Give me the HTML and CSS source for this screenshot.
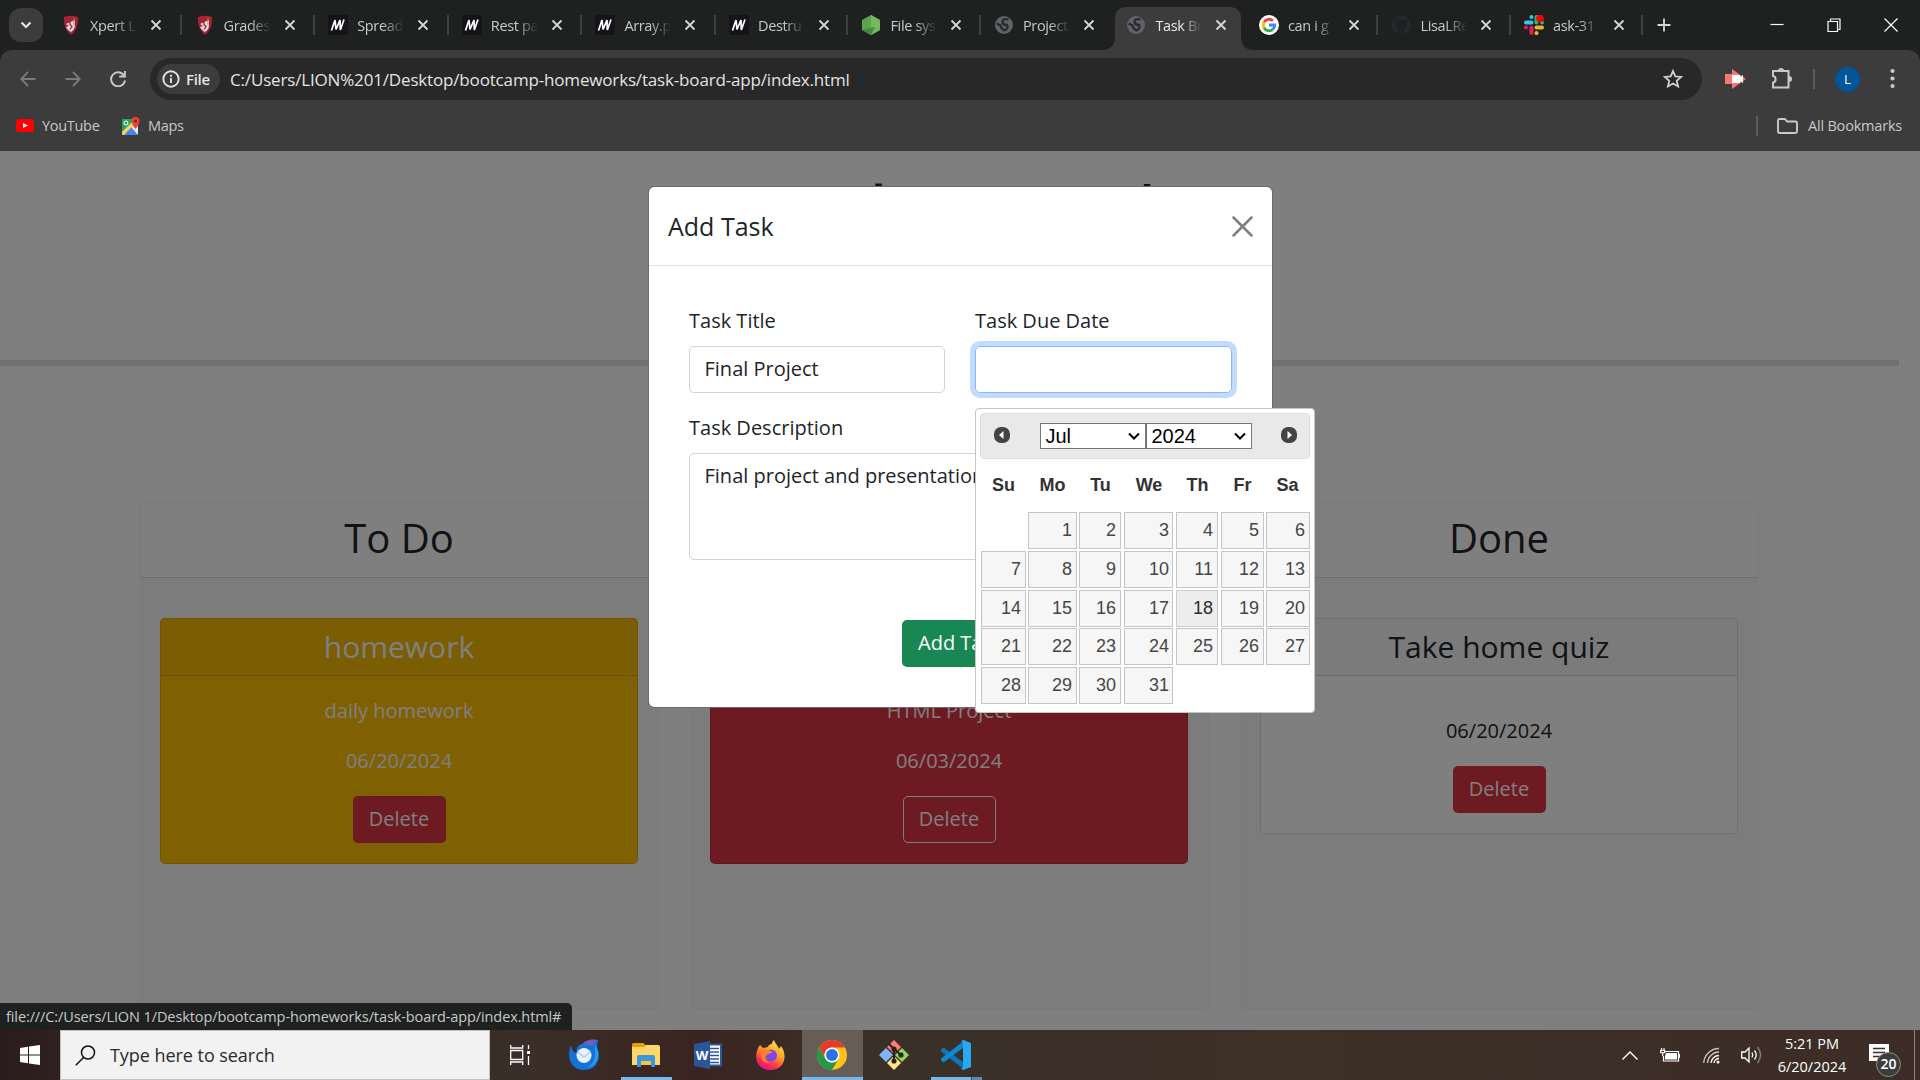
FILE: index.html
```html
<!DOCTYPE html>
<html lang="en">
<head>
<meta charset="utf-8">
<title>Task Board</title>
<link rel="stylesheet" href="styles.css">
</head>
<body>
<svg class="defs" width="0" height="0" aria-hidden="true">
  <symbol id="shield" viewBox="0 0 20 20"><path d="M3 2Q10-.5 17 2Q18 14 10 20Q2 14 3 2Z" fill="#a52238"/><path d="M5 9l9-4v4c0 4-1 6-4 8-2-1-4-3-5-5l3-1z" fill="#e8d9dc"/><path d="M9 5.500v4l2 2-2 3" stroke="#8d2a3c" stroke-width="1.300" fill="none"/><path d="M13 3v7" stroke="#b08a3c" stroke-width="1"/></symbol>
  <symbol id="mdn" viewBox="0 0 20 20"><path d="M0 0h20v20H0z" fill="#15141a"/><path d="M3.500 15.500L7 5L8 14.500L12 5L12.300 15L16 4.500" stroke="#fff" stroke-width="1.700" fill="none" stroke-linejoin="bevel"/></symbol>
  <symbol id="node" viewBox="0 0 20 20"><path d="M10 0l9 5v10l-9 5-9-5V5z" fill="#5fa34e"/><path d="M10 0l9 5v10l-9 5z" fill="#76b861"/><path d="M1 15l9 5 4-8z" fill="#438b3f"/></symbol>
  <symbol id="globe" viewBox="0 0 20 20"><circle cx="10" cy="10" r="9" fill="#5f6368"/><path d="M14.500 4.500Q8 3 8.500 7.500Q9.500 10 13 10Q15 13 10.500 15.500Q6.500 13 6.500 10.500L2.500 8.500" fill="none" stroke="#2a2b2d" stroke-width="2.300"/></symbol>
  <symbol id="google" viewBox="0 0 20 20"><circle cx="10" cy="10" r="10" fill="#fff"/><g fill="none" stroke-width="2.800"><path d="M14 5.800A5.800 5.800 0 0 0 5 7.200" stroke="#ea4335"/><path d="M5 7.200A5.800 5.800 0 0 0 5 12.800" stroke="#fbbc05"/><path d="M5 12.800A5.800 5.800 0 0 0 13.500 14.600" stroke="#34a853"/><path d="M13.500 14.600A5.800 5.800 0 0 0 15.800 10H10" stroke="#4285f4"/></g></symbol>
  <symbol id="github" viewBox="0 0 20 20"><path d="M10 .5a9.500 9.500 0 0 0-3 18.500v-3c-3 .5-3-1.500-4-2 1.500-.5 2 1.500 4 1 0-.7.300-1.200.6-1.500C4 13 3.500 10 4.500 7.500c-.3-1-.2-2 .1-3 1 0 2 .6 2.800 1.200a9 9 0 0 1 5.200 0c.8-.6 1.800-1.200 2.800-1.200.3 1 .4 2 .1 3 1 2.500.5 5.500-3.100 6 .4.400.6 1 .6 2V19A9.500 9.500 0 0 0 10 .5z" fill="#24292f"/></symbol>
  <symbol id="slack" viewBox="0 0 20 20"><g stroke-width="4" stroke-linecap="round"><path d="M7.500 2v.1M2 7.500h5.500" stroke="#36c5f0"/><path d="M12.500 2v5.500M18 7.500v.1" stroke="#2eb67d"/><path d="M12.500 12.500H18M12.500 18v.1" stroke="#ecb22e"/><path d="M7.500 12.500V18M2 12.500v.1" stroke="#e01e5a"/></g><circle cx="16" cy="3.500" r="3.800" fill="red"/></symbol>
  <symbol id="x" viewBox="0 0 12 12"><path d="M1.500 1.500l9 9M10.500 1.500l-9 9" stroke="#d5d6d6" stroke-width="1.800"/></symbol>
</svg>

<header class="chrome">
  <div class="tabstrip">
    <div class="tab-search"><svg width="12" height="8" viewBox="0 0 12 8"><path d="M1.500 1.500L6 6l4.500-4.500" fill="none" stroke="#e3e3e3" stroke-width="2.200"/></svg></div>
    <div class="tab wide"><svg class="fav"><use href="#shield"/></svg><span>Xpert L</span><svg class="close"><use href="#x"/></svg></div>
    <div class="tab wide"><svg class="fav"><use href="#shield"/></svg><span>Grades</span><svg class="close"><use href="#x"/></svg></div>
    <div class="tab wide"><svg class="fav"><use href="#mdn"/></svg><span>Spread</span><svg class="close"><use href="#x"/></svg></div>
    <div class="tab wide"><svg class="fav"><use href="#mdn"/></svg><span>Rest pa</span><svg class="close"><use href="#x"/></svg></div>
    <div class="tab wide"><svg class="fav"><use href="#mdn"/></svg><span>Array.p</span><svg class="close"><use href="#x"/></svg></div>
    <div class="tab"><svg class="fav"><use href="#mdn"/></svg><span>Destru</span><svg class="close"><use href="#x"/></svg></div>
    <div class="tab"><svg class="fav"><use href="#node"/></svg><span>File sys</span><svg class="close"><use href="#x"/></svg></div>
    <div class="tab plain"><svg class="fav"><use href="#globe"/></svg><span>Project</span><svg class="close"><use href="#x"/></svg></div>
    <div class="tab active"><svg class="shape" width="152" height="43" viewBox="0 0 152 43"><path d="M0 43Q13 43 13 29V12Q13 0 25 0H127Q139 0 139 12V29Q139 43 152 43Z" fill="#3c3c3c"/></svg><svg class="fav"><use href="#globe"/></svg><span>Task Bo</span><svg class="close"><use href="#x"/></svg></div>
    <div class="tab"><svg class="fav"><use href="#google"/></svg><span>can i g</span><svg class="close"><use href="#x"/></svg></div>
    <div class="tab"><svg class="fav"><use href="#github"/></svg><span>LisaLRe</span><svg class="close"><use href="#x"/></svg></div>
    <div class="tab"><svg class="fav"><use href="#slack"/></svg><span>ask-31</span><svg class="close"><use href="#x"/></svg></div>
    <svg class="new-tab" width="14" height="14" viewBox="0 0 14 14"><path d="M7 .5v13M.5 7h13" stroke="#d5d6d6" stroke-width="1.800"/></svg>
    <div class="window-controls">
      <svg width="14" height="14" viewBox="0 0 14 14"><path d="M.5 6.500h13" stroke="#fff" stroke-width="1.200"/></svg>
      <svg width="14" height="14" viewBox="0 0 14 14" fill="none" stroke="#fff" stroke-width="1.200"><path d="M1 3.500h9.500v10H1zM3.500 3.500V1H13v10.500h-2.500"/></svg>
      <svg width="14" height="14" viewBox="0 0 14 14"><path d="M.5.5l13 13M13.500.5l-13 13" stroke="#fff" stroke-width="1.200"/></svg>
    </div>
  </div>
  <div class="toolbar">
    <div class="nav-icons">
      <svg width="16" height="16" viewBox="0 0 16 16" fill="none" stroke="#7b7b7b" stroke-width="1.800"><path d="M15.500 8H1.500M8 1L1.200 8 8 15"/></svg>
      <svg width="16" height="16" viewBox="0 0 16 16" fill="none" stroke="#7b7b7b" stroke-width="1.800"><path d="M.5 8h14M8 1l6.800 7L8 15"/></svg>
      <svg width="16" height="16" viewBox="0 0 16 16" fill="none" stroke="#c9c9c9" stroke-width="1.900"><path d="M13.800 4.200A7 7 0 1 0 15 9.500M14.900 0v5.500H9.200"/></svg>
    </div>
    <div class="omnibox">
      <div class="chip"><svg width="18" height="18" viewBox="0 0 18 18" fill="none" stroke="#e3e3e3" stroke-width="1.900"><circle cx="9" cy="9" r="7.700"/><path d="M9 8v5M9 4.800v2"/></svg><span>File</span></div>
      <span class="url">C:/Users/LION%201/Desktop/bootcamp-homeworks/task-board-app/index.html</span>
      <svg class="star" width="20" height="20" viewBox="0 0 20 20"><path d="M10 2l2.300 5.400 5.900.5-4.500 3.900 1.400 5.700-5.100-3-5.100 3 1.400-5.700L1.800 7.900l5.900-.5z" fill="none" stroke="#d0d0d0" stroke-width="1.800"/></svg>
    </div>
    <div class="toolbar-end">
      <svg width="22" height="20" viewBox="0 0 22 20"><path d="M0 5h7V0l14 10-14 10v-5H0z" fill="#fa7476"/><path d="M7 6h8v2l3-2v8l-3-2v2H7z" fill="#fff"/></svg>
      <svg class="ext" width="21" height="22" viewBox="0 0 21 22" fill="none" stroke="#c9c9c9" stroke-width="2"><path d="M2 3h15.500v16.500H2v-5c3.500-.5 3.500-6 0-6.500z"/><path d="M8 3a2 2 0 0 1 4 0M18 9a2 2 0 0 1 0 4" fill="#c9c9c9"/></svg>
      <i class="vline"></i>
      <b class="avatar">L</b>
      <svg width="5" height="22" viewBox="0 0 5 22" fill="#c9c9c9"><circle cx="2.500" cy="3" r="2.100"/><circle cx="2.500" cy="10.500" r="2.100"/><circle cx="2.500" cy="18" r="2.100"/></svg>
    </div>
  </div>
  <div class="bookmarks">
    <svg width="18" height="13" viewBox="0 0 18 13"><rect width="18" height="13" rx="3" fill="red"/><path d="M7 4l5 2.500L7 9z" fill="#fff"/></svg>
    <span class="bm yt">YouTube</span>
    <svg width="18" height="18" viewBox="0 0 18 18"><rect y="2" width="16" height="16" rx="1.500" fill="#e8eaed"/><path d="M0 3.500Q0 2 1.500 2H12v4L1 17.500Q0 17 0 16z" fill="#23a566"/><path d="M2 18L9 10l7 8z" fill="#4285f4"/><path d="M0 15L10 5l2 3L1.500 18Q0 18 0 16z" fill="#fbd34c"/><path d="M0 12V3.500Q0 2 1.500 2H9v4z" fill="#23a566"/><circle cx="4" cy="6" r="2" fill="none" stroke="#fff"/><path d="M13.500 12Q9.500 7 9.500 4a4 4 0 0 1 8 0Q17.500 7 13.500 12z" fill="#ea4335"/><circle cx="13.500" cy="4" r="1.500" fill="#8c1d18"/></svg>
    <span class="bm maps">Maps</span>
    <i class="vline"></i>
    <svg width="21" height="16" viewBox="0 0 21 16"><path d="M1 2.500Q1 1 2.500 1H8l2 2.500h8.500Q20 3.500 20 5v8.500q0 1.500-1.500 1.500h-16Q1 15 1 13.500z" fill="none" stroke="#c9c9c9" stroke-width="1.900"/></svg>
    <span class="bm all">All Bookmarks</span>
  </div>
</header>

<main class="page">
  <div class="page-head"><h1>Task Board</h1></div>
  <div class="rule"></div>
  <div class="lanes">
    <section class="lane">
      <h2>To Do</h2>
      <div class="lane-body">
        <article class="card warning">
          <h4>homework</h4>
          <div class="card-body"><p>daily homework</p><p>06/20/2024</p><button class="btn danger">Delete</button></div>
        </article>
      </div>
    </section>
    <section class="lane">
      <h2></h2>
      <div class="lane-body">
        <article class="card late">
          <h4></h4>
          <div class="card-body"><p>HTML Project</p><p>06/03/2024</p><button class="btn danger outlined">Delete</button></div>
        </article>
      </div>
    </section>
    <section class="lane">
      <h2>Done</h2>
      <div class="lane-body">
        <article class="card">
          <h4>Take home quiz</h4>
          <div class="card-body"><p class="empty"></p><p>06/20/2024</p><button class="btn danger">Delete</button></div>
        </article>
      </div>
    </section>
  </div>
  <div class="backdrop"></div>

  <div class="modal">
    <div class="modal-head"><h5>Add Task</h5><svg width="21" height="21" viewBox="0 0 21 21"><path d="M1.500 1.500l18 18M19.500 1.500l-18 18" stroke="#7f7f7f" stroke-width="2.500" stroke-linecap="round"/></svg></div>
    <form class="modal-body">
      <div class="form-row">
        <div class="field"><label>Task Title</label><div class="input">Final Project</div></div>
        <div class="field"><label>Task Due Date</label><div class="input focused"></div></div>
      </div>
      <div class="field"><label>Task Description</label><div class="input area">Final project and presentation</div></div>
      <div class="submit-row"><button type="button" class="btn success">Add Task</button></div>
    </form>
  </div>

  <div class="picker">
    <div class="picker-head">
      <svg width="16" height="16" viewBox="0 0 16 16"><rect width="16" height="16" rx="7" fill="#444"/><path d="M9.500 4v8L5 8z" fill="#fff"/></svg>
      <div class="selects">
        <div class="select">Jul<svg width="12" height="8" viewBox="0 0 12 8"><path d="M1 1.500l5 5 5-5" fill="none" stroke="#000" stroke-width="2"/></svg></div>
        <div class="select">2024<svg width="12" height="8" viewBox="0 0 12 8"><path d="M1 1.500l5 5 5-5" fill="none" stroke="#000" stroke-width="2"/></svg></div>
      </div>
      <svg width="16" height="16" viewBox="0 0 16 16"><rect width="16" height="16" rx="7" fill="#444"/><path d="M6.500 4v8L11 8z" fill="#fff"/></svg>
    </div>
    <div class="week dow"><b>Su</b><b>Mo</b><b>Tu</b><b>We</b><b>Th</b><b>Fr</b><b>Sa</b></div>
    <div class="week"><i></i><a>1</a><a>2</a><a>3</a><a>4</a><a>5</a><a>6</a></div>
    <div class="week"><a>7</a><a>8</a><a>9</a><a>10</a><a>11</a><a>12</a><a>13</a></div>
    <div class="week"><a>14</a><a>15</a><a>16</a><a>17</a><a class="hover">18</a><a>19</a><a>20</a></div>
    <div class="week"><a>21</a><a>22</a><a>23</a><a>24</a><a>25</a><a>26</a><a>27</a></div>
    <div class="week"><a>28</a><a>29</a><a>30</a><a>31</a></div>
  </div>
  <div class="status"><span>file:///C:/Users/LION 1/Desktop/bootcamp-homeworks/task-board-app/index.html#</span></div>
</main>

<footer class="taskbar">
  <div class="start"><svg width="20" height="20" viewBox="0 0 20 20" fill="#fff"><path d="M0 3l8-1.200v7.700H0zM9 1.600L20 0v9.500H9zM0 10.500h8v7.700L0 17zM9 10.500h11V20L9 18.400z"/></svg></div>
  <div class="search"><svg width="21" height="21" viewBox="0 0 21 21" fill="none" stroke="#111" stroke-width="1.500"><circle cx="13" cy="7.500" r="6.500"/><path d="M8.500 12.500L.8 20.200"/></svg><span>Type here to search</span></div>
  <div class="task-view"><svg width="20" height="20" viewBox="0 0 20 20" fill="none" stroke="#fff" stroke-width="1.300"><path d="M.7 5.500h12v9H.7zM.7 0v3h12V0M.7 20v-3h12v3M18.500 0v4M18.500 11v9"/><path d="M17 6h3v3h-3z" fill="#fff" stroke="none"/></svg></div>
  <div class="app"><svg width="32" height="32" viewBox="0 0 32 32"><path d="M3 6C-2 18 3 31 16 31c9 0 15-6 15-15 0-4-2-6-2-9l1-6C24 0 17 1 15 5c-3 0-5 2-6 4L8 14Q3 11 3 6z" fill="#1373d9"/><path d="M14 5Q20-1 30 1q-3 1-5 6z" fill="#6f5cc5"/><path d="M27 6q6 8 1 17-3 5-9 6 8-5 8-13z" fill="#2e9af5"/><ellipse cx="16" cy="16.500" rx="7.500" ry="7.500" fill="#e8f3ff"/><path d="M9.500 13l6.500 5 6.500-5" fill="none" stroke="#a9cce9" stroke-width="1.500"/></svg></div>
  <div class="app open"><svg width="28" height="24" viewBox="0 0 28 24"><path d="M0 1.500Q0 0 1.500 0h10L14 2.500V6H0z" fill="#e3a000"/><path d="M0 4h12l2-2h12q2 0 2 2v18H0z" fill="#ffd768"/><path d="M5 24V14q0-2 2-2h14q2 0 2 2v10h-4v-6H9v6z" fill="#3a97dd"/><path d="M9 18h10v4H9z" fill="#f7c23c"/></svg></div>
  <div class="app"><svg class="word" width="28" height="28" viewBox="0 0 28 28"><path d="M14 3.500h13v21H14z" fill="#fff" stroke="#2b579a" stroke-width="2"/><path d="M16 7.500h9M16 11h9M16 14.500h9M16 18h9M16 21.500h9" stroke="#2b579a" stroke-width="1.500"/><path d="M0 3l16-3v28L0 25z" fill="#2b579a"/><text x="8" y="19" text-anchor="middle">W</text></svg></div>
  <div class="app"><svg width="29" height="30" viewBox="0 0 29 30"><defs><linearGradient id="ff" x1=".8" y1="0" x2=".3" y2="1"><stop offset="0" stop-color="#fff04a"/><stop offset=".45" stop-color="#ff9a25"/><stop offset=".8" stop-color="#fa2a55"/><stop offset="1" stop-color="#e0128e"/></linearGradient></defs><path d="M4 5l3 3 5-1c1-3 3-3 4-3 0-2 1-3 2-4 1 4 4 5 5 9l2-3c7 9 4 24-11 24C-1 30-3 14 4 5z" fill="url(#ff)"/><circle cx="15" cy="15.500" r="6" fill="#7a4ae8"/><path d="M5 9c4-1 7 1 12 3-2 2-6 1-7 4-2 3 1 6 4 7-6 1-9-3-9-7z" fill="#ff8026"/></svg></div>
  <div class="app current"><svg width="30" height="30" viewBox="0 0 30 30"><circle cx="15" cy="15" r="15" fill="#ffc11a"/><path d="M2 7.500A15 15 0 0 1 28 7.500H15A7.500 7.500 0 0 0 8.500 18.800z" fill="#e33b2e"/><path d="M2 7.500A15 15 0 0 0 15 30l6.500-11.300A7.500 7.500 0 0 1 8.500 18.800z" fill="#229a49"/><circle cx="15" cy="15" r="7.500" fill="#fff"/><circle cx="15" cy="15" r="6" fill="#2a73e8"/></svg></div>
  <div class="app"><svg width="30" height="30" viewBox="0 0 30 30"><path d="M15 0l7 7-7 7-7-7z" fill="#fc7c7f"/><path d="M23 8l7 7-7 7-7-7z" fill="#91d35f"/><path d="M7 8l7 7-7 7-7-7z" fill="#81b3ff"/><path d="M15 16l7 7-7 7-7-7z" fill="#ffe783"/><path d="M10 4l5 5v12M15 9l7 6" stroke="#2c221d" stroke-width="2" fill="none"/><g fill="#2c221d"><circle cx="15" cy="9" r="2.600"/><circle cx="15" cy="21" r="2.600"/><circle cx="22" cy="15" r="2.600"/></g></svg></div>
  <div class="app open multi"><svg width="30" height="30" viewBox="0 0 30 30"><path d="M0 9.500L2.500 7.500 24 23.500V30L0 11.500z" fill="#0f76bd"/><path d="M0 20.500L2.500 22.500 24 6.500V0L0 18.500z" fill="#0f88d1"/><path d="M22 0l8 3v24l-8 3-2-1.500q2 0 2-2v-23q0-2-2-2z" fill="#29a9f2"/></svg></div>
  <div class="tray">
    <svg width="16" height="9" viewBox="0 0 16 9"><path d="M.5 8.500L8 1l7.500 7.500" fill="none" stroke="#fff" stroke-width="1.400"/></svg>
    <svg class="battery" width="20" height="14" viewBox="0 0 20 14" fill="none" stroke="#fff" stroke-width="1.200"><path d="M5.500 3.500h13v9.500h-15V8M19.500 6v4M1.500 0v2.500M4 0v2.500M.7 2.500h4v2.200H.7zM2.700 5v3"/><path d="M6 5h11v6.500H5V8z" fill="#fff" stroke="none"/></svg>
    <svg class="wifi" width="17" height="17" viewBox="0 0 17 17" fill="none" stroke="#fff" stroke-width="1.300"><g stroke="#c7c2bf"><path d="M.7 16A15.300 15.300 0 0 1 16 1.500"/><path d="M4.500 16A11.500 11.500 0 0 1 16 5"/></g><path d="M8 16a8 8 0 0 1 8-7.500M11 16a5 5 0 0 1 5-4.500"/><circle cx="15" cy="15" r="1.500" fill="#fff" stroke="none"/></svg>
    <svg class="sound" width="21" height="18" viewBox="0 0 21 18" fill="none" stroke="#fff" stroke-width="1.300"><path d="M.7 6h3.300l4-4v14l-4-4H.7zM11 6.500q1.500 2.500 0 5M13.500 4.500q3.500 4.500 0 9"/><path d="M16.500 1q6 8 0 16" stroke="#8c8580"/></svg>
    <div class="clock"><span>5:21 PM</span><span>6/20/2024</span></div>
    <div class="notify"><svg width="20" height="20" viewBox="0 0 20 20"><path d="M0 0h20v17h-5v3l-4-3H0z" fill="#fff"/><path d="M4 4.500h12M4 8.500h12M4 12.500h8" stroke="#3a2e26" stroke-width="1.300"/></svg><span>20</span></div>
    <i class="peek"></i>
  </div>
</footer>
</body>
</html>
```
FILE: styles.css
```css
* { box-sizing: border-box; }
body { margin: 0; width: 1920px; height: 1080px; overflow: hidden; display: flex; flex-direction: column; font-family: "Open Sans", "Noto Sans", sans-serif; color: #212529; }
svg { display: block; flex: none; }
h1, h2, h4, h5, p { margin: 0; font-weight: 400; }
.defs { position: absolute; }

/* Browser window */
.chrome { height: 151px; flex: none; background: #1f2121; color: #c7c8c8; }
.tabstrip { height: 50px; display: flex; align-items: center; }
.tab-search { width: 34px; height: 34px; margin: 0 4.500px 0 8.500px; border-radius: 12px; background: #3c3c3c; display: flex; align-items: center; justify-content: center; }
.tab { position: relative; width: 132.500px; height: 50px; padding-left: 14px; display: flex; align-items: center; flex: none; }
.tab.wide { width: 133.600px; }
.tab .fav { width: 20px; height: 20px; }
.tab span { width: 47px; margin-left: 9px; overflow: hidden; white-space: nowrap; font-size: 14.500px; letter-spacing: -.35px; -webkit-mask-image: linear-gradient(90deg, #000 55%, transparent); mask-image: linear-gradient(90deg, #000 55%, transparent); }
.tab .close { width: 12px; height: 12px; margin-left: 13px; }
.tab::after { content: ""; position: absolute; right: -1px; top: 15px; width: 2px; height: 20px; background: #3f4141; }
.tab.plain::after { display: none; }
.tab.active { color: #e8e8e8; }
.tab.active::after { display: none; }
.tab > * { position: relative; z-index: 1; }
.tab .shape { position: absolute; z-index: 0; left: -10px; top: 7px; }
.new-tab { margin-left: 15px; }
.window-controls { margin: 0 22px 0 auto; display: flex; gap: 43px; }
.toolbar { height: 58px; padding: 0 25px 0 20px; display: flex; align-items: center; background: #3c3c3c; border-radius: 12px 12px 0 0; }
.nav-icons { width: 130px; display: flex; gap: 29px; }
.omnibox { width: 1552px; height: 42px; padding: 0 19px 0 7px; border-radius: 21px; background: #282828; display: flex; align-items: center; }
.chip { width: 63px; height: 30px; padding-left: 5px; border-radius: 15px; background: #3c3c3c; color: #e3e3e3; display: flex; align-items: center; gap: 6px; font-size: 15px; font-weight: 600; letter-spacing: -.3px; }
.url { margin-left: 10px; color: #e3e3e3; font-size: 17px; letter-spacing: -.165px; white-space: nowrap; }
.star { margin-left: auto; }
.toolbar-end { margin-left: 23px; display: flex; align-items: center; }
.toolbar-end .ext { margin: 0 21px 0 24px; }
.vline { width: 2px; height: 20px; background: #5c5c5c; }
.avatar { width: 25px; height: 25px; margin: 0 30px 0 20px; border-radius: 50%; background: #00559b; color: #fff; font-size: 13px; line-height: 25px; font-weight: 400; text-align: center; }
.bookmarks { height: 43px; padding: 0 18px 8px 16px; display: flex; align-items: center; background: #3c3c3c; font-size: 14.500px; letter-spacing: -.3px; white-space: nowrap; }
.bm { margin-left: 8px; }
.yt { width: 80px; }
.bookmarks .vline { margin: 0 19px 0 auto; }
.all { margin-left: 10px; width: 94px; letter-spacing: -.2px; }

/* Task board page */
.page { position: relative; height: 879px; flex: none; background: #fff; overflow: hidden; font-size: 20px; line-height: 30px; }
.page-head { height: 209px; width: 1899px; padding-top: 15px; text-align: center; }
h1 { font-size: 80px; line-height: 96px; }
.rule { height: 6px; width: 1899px; background: #dee2e6; }
.lanes { width: 1619px; margin: 137px 0 0 139.500px; display: grid; grid-template-columns: repeat(3, 519px); gap: 31px; text-align: center; }
.lane { height: 507px; border: 1px solid #f5f6f7; border-radius: 5px; background: #f8f9fa; }
.lane h2 { height: 74px; padding-top: 10px; font-size: 40px; line-height: 48px; background: #fff; border-bottom: 1px solid #dadada; }
.lane-body { padding: 40px 19.500px; }
.card { border: 1px solid rgba(0,0,0,.13); border-radius: 5px; background: #fff; }
.card h4 { height: 57px; padding-top: 10px; font-size: 30px; line-height: 36px; background: rgba(0,0,0,.03); border-bottom: 1px solid rgba(0,0,0,.13); }
.card-body { padding: 20px; }
.card p { margin-bottom: 20px; }
.card p.empty { height: 0; }
.warning { background: #ffc107; color: #fff; }
.late { background: #dc3545; color: #fff; }
.btn { height: 47px; padding: 0 15px 2px; border: 1px solid transparent; border-radius: 5px; color: #fff; font: 20px/30px "Open Sans", sans-serif; display: block; }
.card .btn { margin: 0 auto; width: 93px; padding: 0 0 2px; }
.danger { background: #dc3545; }
.outlined { border-color: #f8f9fa; }
.success { background: #198754; }
.backdrop { position: absolute; inset: 0; background: rgba(0,0,0,.5); }

/* Add Task dialog */
.modal { position: absolute; left: 648px; top: 35px; width: 625px; height: 522px; border: 1px solid #6b6b6b; border-radius: 6px; background: #fff; background-clip: padding-box; }
.modal-head { height: 79px; padding: 0 19px; border-bottom: 1px solid #dee2e6; display: flex; align-items: center; justify-content: space-between; }
h5 { font-size: 25px; line-height: 37px; }
.modal-body { padding: 40px; }
.form-row { display: grid; grid-template-columns: 256px 257px; gap: 30px; margin-bottom: 20px; }
.field label { display: block; height: 40px; }
.input { height: 47px; padding: 7px 14.500px; border: 1px solid #ced4da; border-radius: 5px; white-space: nowrap; }
.focused { border-color: #86b7fe; box-shadow: 0 0 0 5px rgba(13,110,253,.25); }
.area { height: 107px; }
.submit-row { margin-top: 60px; padding-left: 213px; }

/* Date picker */
.picker { position: absolute; left: 975px; top: 257px; width: 340px; height: 305px; padding: 4px; border: 1px solid #c5c5c5; border-radius: 4px; background: #fff; color: #333; font: 18px/27px "Liberation Sans", Arial, sans-serif; }
.picker-head { height: 46px; padding: 0 12px 0 13px; border: 1px solid #ddd; border-radius: 4px; background: #e9e9e9; display: flex; align-items: center; justify-content: space-between; }
.selects { display: flex; }
.picker-head > svg { margin-bottom: 2px; }
.select { width: 106px; height: 26px; padding: 0 5px; border: 1px solid #767676; background: #fff; color: #000; font-size: 20px; line-height: 24px; display: flex; align-items: center; justify-content: space-between; }
.week { display: grid; grid-template-columns: 47px 51px 45px 52px 45px 45px 45px; height: 38.800px; }
.week a { height: 37px; margin: 1px; padding: 4px 4px 2px; border: 1px solid #c5c5c5; background: #f6f6f6; color: #454545; text-align: right; }
.week a:nth-child(3), .week a:nth-child(5) { margin-right: 2px; }
.week a:nth-child(4) { margin-right: 2px; padding-right: 3px; }
.week a:nth-child(7) { margin-right: 0; }
.week a.hover { background: #ededed; border-color: #ccc; color: #2b2b2b; }
.dow { height: 52px; padding-top: 13px; text-align: center; }

.status { position: absolute; left: 0; bottom: 0; width: 572px; height: 27px; padding-left: 6px; border-radius: 0 5px 0 0; background: #1f2121; color: #c7c8c8; font-size: 14.500px; letter-spacing: -.1px; line-height: 27px; white-space: nowrap; }

/* Windows taskbar */
.taskbar { height: 50px; display: flex; align-items: stretch; background: linear-gradient(90deg, #2a1c1c 0, #2f211f 60px, #3a2f28 520px, #3a2420 700px, #3b3028 850px, #3c3027 1300px, #3c2d26 1920px); color: #fff; }
.start { width: 60px; display: flex; align-items: center; justify-content: center; }
.search { width: 430px; padding-left: 14px; display: flex; align-items: center; gap: 14px; border: 1px solid #c4c2c1; background: #f2f2f2; color: #2b2b2b; font-size: 18px; letter-spacing: -.05px; white-space: nowrap; }
.task-view { width: 63px; padding-left: 20px; display: flex; align-items: center; }
.app { position: relative; width: 62px; display: flex; align-items: center; justify-content: center; }
.app.open::after, .app.current::after { content: ""; position: absolute; left: 6px; right: 5px; bottom: 0; height: 3px; background: #76b9ed; }
.app.current { background: linear-gradient(#665d57, #665d57) 1px 0 / 61px 50px no-repeat; }
.app.current::after { left: 1px; right: 0; }
.app.multi::after { right: 5px; background: linear-gradient(90deg, #76b9ed 40px, #3d4d5a 40px, #3d4d5a 41px, #5b8bb3 41px); }
.word text { fill: #fff; font: bold 13px "Open Sans", sans-serif; }
.tray { margin-left: auto; display: flex; align-items: center; }
.battery { margin-left: 22px; }
.wifi { margin-left: 23px; }
.sound { margin-left: 21px; }
.clock { width: 84px; margin-left: 8px; display: flex; flex-direction: column; align-items: center; font-size: 14.500px; line-height: 23px; white-space: nowrap; }
.notify { position: relative; width: 45px; margin-left: 15px; padding-bottom: 2px; }
.notify span { position: absolute; left: 7px; top: 8px; width: 25px; height: 25px; border: 1px solid #8b8b8b; border-radius: 50%; background: #3d3d3d; font-size: 14px; font-weight: 600; line-height: 22px; text-align: center; }
.peek { width: 1px; height: 50px; margin-right: 5px; background: #8b817b; }
```
